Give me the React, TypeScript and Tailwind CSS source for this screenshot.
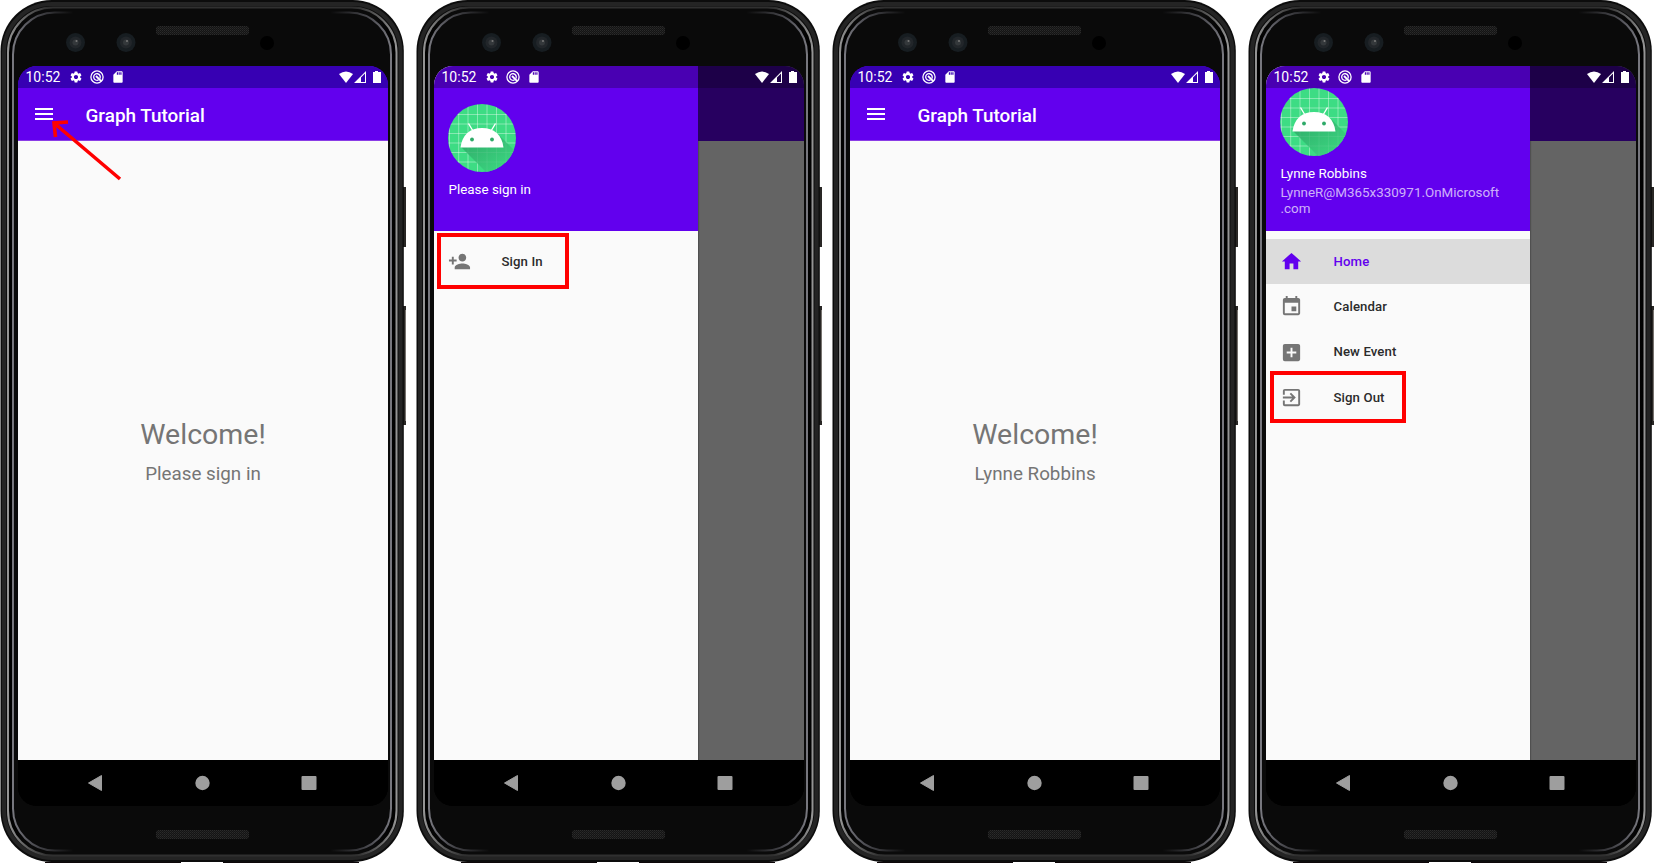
import React from "react";
import { MdSettings, MdSdCard, MdHome, MdEvent, MdAddBox, MdExitToApp, MdPersonAddAlt1, MdMenu } from "react-icons/md";

function Frame() {
  return (
    <svg className="absolute left-0 top-0" width="406" height="864" viewBox="0 0 406 864">
      <defs>
        <pattern id="mesh" width="2" height="2" patternUnits="userSpaceOnUse">
          <rect width="2" height="2" fill="#141414" />
          <rect width="1" height="1" fill="#2b2b2b" />
          <rect x="1" y="1" width="1" height="1" fill="#222" />
        </pattern>
        <linearGradient id="fade" x1="0" x2="1" y1="0" y2="0">
          <stop offset="0" stopColor="#77777e" />
          <stop offset="0.05" stopColor="#505056" />
          <stop offset="0.16" stopColor="#0a0a0a" />
          <stop offset="0.84" stopColor="#0a0a0a" />
          <stop offset="0.95" stopColor="#505056" />
          <stop offset="1" stopColor="#77777e" />
        </linearGradient>
        <linearGradient id="rim" x1="0" x2="1" y1="0" y2="0">
          <stop offset="0" stopColor="#949494" />
          <stop offset="0.04" stopColor="#666" />
          <stop offset="0.1" stopColor="#303030" />
          <stop offset="0.9" stopColor="#303030" />
          <stop offset="0.96" stopColor="#666" />
          <stop offset="1" stopColor="#949494" />
        </linearGradient>
        <linearGradient id="face" x1="0" x2="1" y1="0" y2="0">
          <stop offset="0" stopColor="#000" />
          <stop offset="0.06" stopColor="#0a0a0a" />
          <stop offset="0.94" stopColor="#0a0a0a" />
          <stop offset="1" stopColor="#000" />
        </linearGradient>
      </defs>
      <rect x="402" y="187" width="4" height="60" fill="#292725" />
      <rect x="402" y="306" width="4" height="119" fill="#292725" />
      <path d="M405.500 310V421" stroke="#77736f" strokeWidth="1" />
      <rect x="0.500" y="0" width="403.300" height="862" rx="51" fill="#0c0c0c" />
      <rect x="4" y="4" width="396.500" height="854" rx="48" fill="none" stroke="#242424" strokeWidth="4" />
      <rect x="8" y="7.500" width="388.500" height="848" rx="45" fill="url(#face)" stroke="url(#rim)" strokeWidth="2" />
      <rect x="13" y="12.500" width="378" height="838" rx="42" fill="#0a0a0a" stroke="url(#fade)" strokeWidth="2" />
      <path d="M45 862.500H181M223 862.500H359" stroke="#0c0608" />
      {[75.5, 126].map((x) => (
        <g key={x}>
          <circle cx={x} cy="42.500" r="9.500" fill="#171d21" />
          <circle cx={x} cy="42.500" r="6" fill="#22262a" />
          <circle cx={x} cy="42.500" r="3" fill="#34383b" />
          <circle cx={x + 1} cy="41" r="1" fill="#777" />
        </g>
      ))}
      <circle cx="267" cy="43" r="7" fill="#000" />
      <rect x="156" y="26" width="93" height="9" rx="3" fill="url(#mesh)" />
      <rect x="156" y="830" width="93" height="9" rx="3" fill="url(#mesh)" />
    </svg>
  );
}

function StatusBar({ tint }: { tint: string }) {
  return (
    <div className={`absolute inset-x-0 top-0 flex h-[22px] items-center pl-[7.500px] text-white ${tint}`}>
      <span className="w-[43px] text-[14px] leading-[22px]">10:52</span>
      <MdSettings className="size-[14px]" />
      <svg className="ml-[7px] size-[14px]" viewBox="0 0 14 14" fill="none" stroke="white">
        <circle cx="7" cy="7" r="6.100" strokeWidth="1.300" />
        <path d="M8.700 9.800A3.300 3.300 0 1 1 9.800 8.700" strokeWidth="1.300" />
        <path d="M6 6L11.200 11.200" strokeWidth="1.800" />
      </svg>
      <MdSdCard className="ml-[7px] size-[14px]" />
      <div className="flex-1" />
      <svg className="h-[13px] w-[43px]" viewBox="0 0 43 13" fill="white">
        <path d="M0 3Q7 -2 14 3L7 12Z" />
        <path d="M15 12L27 0V12ZM22 6.500V11H26V2.500Z" fillRule="evenodd" />
        <path d="M34 1H36V0H39V1H42V12H34Z" />
      </svg>
      <div className="w-[6.500px]" />
    </div>
  );
}

function Avatar() {
  return (
    <svg className="size-[68px] shrink-0" viewBox="0 0 68 68">
      <defs>
        <clipPath id="disc"><circle cx="34" cy="34" r="34" /></clipPath>
        <linearGradient id="shade" x1="0" y1="0" x2="1" y2="1">
          <stop offset="0" stopColor="#2b9d61" />
          <stop offset="1" stopColor="#3ddc84" />
        </linearGradient>
      </defs>
      <g clipPath="url(#disc)">
        <rect width="68" height="68" fill="#3ddc84" />
        <path d="M1.500 0V68M10.700 0V68M20 0V68M29.500 0V68M39 0V68M48.500 0V68M58 0V68M0 10.500H68M0 20H68M0 29.500H68M0 39H68M0 48.500H68M0 58H68" stroke="#fff" strokeOpacity=".42" strokeWidth=".9" />
        <path d="M13 43L38 68H68V48L51 31L55 43Z" fill="url(#shade)" opacity=".82" />
        <path d="M12.500 43.500C14 31 22 24 34 24S54 31 55.500 43.500Z" fill="white" />
        <path d="M20.500 19.500L25 27M47.500 19.500L43 27" stroke="white" strokeWidth="1.400" />
        <circle cx="24" cy="35.500" r="1.900" fill="#2eaa68" />
        <circle cx="44" cy="35.500" r="1.900" fill="#2eaa68" />
      </g>
    </svg>
  );
}

function Home({ name }: { name: string }) {
  return (
    <>
      <header className="flex h-[75px] shrink-0 border-b border-[#8a3ce6] bg-[#6200ee] pt-[22px] text-white">
        <MdMenu className="ml-[14px] mt-[14px] size-[24px]" />
        <h1 className="ml-[29.500px] mt-[14px] text-[18.900px] font-medium leading-[28px]">Graph Tutorial</h1>
      </header>
      <main className="flex flex-1 flex-col items-center bg-[#fafafa] pt-[274px] text-[#757575]">
        <p className="text-[28.500px] leading-[40px]">Welcome!</p>
        <p className="mt-[7px] text-[18.800px] leading-[24px]">{name}</p>
      </main>
    </>
  );
}

type Item = { icon: React.ReactNode; label: string; active?: boolean };

function Drawer({ signedIn, items }: { signedIn?: boolean; items: Item[] }) {
  return (
    <div className="flex flex-1 bg-[#646464]">
      <aside className="flex w-[263.500px] flex-col bg-[#fafafa] shadow-[1px_0_1px_rgba(0,0,0,0.2)]">
        <div className={`flex h-[165px] flex-col bg-[#6200ee] pl-[14.500px] text-[13.400px] text-white ${signedIn ? "pt-[22px]" : "pt-[38px]"}`}>
          <div className="-ml-[0.5px]"><Avatar /></div>
          {signedIn ? (
            <>
              <p className="mt-[9px] leading-[18px]">Lynne Robbins</p>
              <p className="mt-[1.500px] leading-[16px] text-white/70">LynneR@M365x330971.OnMicrosoft<br />.com</p>
            </>
          ) : (
            <p className="mt-[8px] leading-[20px]">Please sign in</p>
          )}
        </div>
        <nav className="pt-[8px]">
          {items.map((item) => (
            <div key={item.label} className={`flex h-[45.300px] items-center pl-[14px] text-[13.200px] font-medium tracking-[0.1px] ${item.active ? "bg-[#dcdcdc] text-[#6200ee]" : "text-[#2b2b2b]"}`}>
              <span className={`w-[53.500px] ${item.active ? "" : "text-[#757575]"}`}>{item.icon}</span>
              {item.label}
            </div>
          ))}
        </nav>
      </aside>
      <div className="h-[75px] flex-1 bg-[#270060]" />
    </div>
  );
}

function Phone({ children, tint = "bg-black/25" }: { children: React.ReactNode; tint?: string }) {
  return (
    <div className="relative h-[864px] w-[406px] shrink-0 pl-[18px] pt-[66px]">
      <Frame />
      <div className="relative flex h-[740px] w-[370px] flex-col overflow-hidden rounded-[19px] bg-black">
        {children}
        <StatusBar tint={tint} />
        <footer className="h-[46px] shrink-0 bg-black">
          <svg width="370" height="46" fill="#9e9e9e">
            <path d="M70.500 23L83.500 15.500V30.500Z" stroke="#9e9e9e" strokeLinejoin="round" />
            <circle cx="184.500" cy="23" r="7.200" />
            <rect x="283.500" y="16" width="15" height="14" rx="1" />
          </svg>
        </footer>
      </div>
    </div>
  );
}

const icon = "size-[23px]";

export default function App() {
  return (
    <div className="relative flex h-[864px] w-[1654px] gap-[10px] overflow-hidden bg-white font-['Roboto',sans-serif]">
      <Phone tint="bg-[#3700b3]"><Home name="Please sign in" /></Phone>
      <Phone><Drawer items={[{ icon: <MdPersonAddAlt1 className="size-[23px] -scale-x-100" />, label: "Sign In" }]} /></Phone>
      <Phone tint="bg-[#3700b3]"><Home name="Lynne Robbins" /></Phone>
      <Phone>
        <Drawer
          signedIn
          items={[
            { icon: <MdHome className={icon} />, label: "Home", active: true },
            { icon: <MdEvent className={icon} />, label: "Calendar" },
            { icon: <MdAddBox className={icon} />, label: "New Event" },
            { icon: <MdExitToApp className={icon} />, label: "Sign Out" },
          ]}
        />
      </Phone>
      <svg className="absolute left-[50px] top-[118px]" width="74" height="64" fill="none" stroke="#f00" strokeWidth="3.600">
        <path d="M70 61L4 5M18 4L4 5L5.500 19" />
      </svg>
      <div className="absolute left-[437px] top-[233px] h-[56px] w-[132px] border-4 border-[#f00]" />
      <div className="absolute left-[1270px] top-[371px] h-[52px] w-[136px] border-4 border-[#f00]" />
    </div>
  );
}
